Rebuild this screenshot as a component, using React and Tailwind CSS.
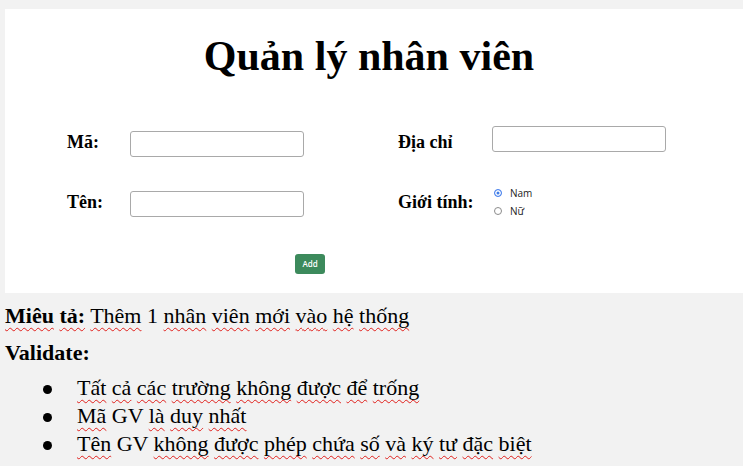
import React from "react";

const serif = "font-['Liberation_Serif','Times_New_Roman',serif]";
const sans = "font-['Open_Sans','Noto_Sans',sans-serif]";
const squiggle =
  "underline decoration-wavy decoration-[#e0201c] decoration-1 underline-offset-[4px] [text-decoration-skip-ink:none]";

// Word-style spell check marks: every word gets a red wave, except the ones in `plain`
const Checked = ({ text, plain = [] }) => {
  const words = text.split(" ");
  return (
    <>
      {words.map((w, i) => (
        <React.Fragment key={i}>
          <span className={plain.includes(w) ? "" : squiggle}>{w}</span>
          {i < words.length - 1 && " "}
        </React.Fragment>
      ))}
    </>
  );
};

const Field = ({ className = "" }) => (
  <input
    type="text"
    className={`w-[174px] h-[26px] border border-[#a9a9a9] rounded-[3px] bg-white outline-none px-1 ${className}`}
  />
);

const Radio = ({ label, checked }) => (
  <label className="flex items-center h-[18px]">
    <input
      type="radio"
      name="gender"
      defaultChecked={checked}
      className="appearance-none w-[8px] h-[8px] rounded-full border border-[#8c8c8c] bg-white checked:border-[#4f86ee] checked:bg-[#3f7de8] checked:shadow-[inset_0_0_0_1.5px_white]"
    />
    <span className={`${sans} ml-[8px] text-[10px] leading-[12px] text-[#222]`}>{label}</span>
  </label>
);

export default function App() {
  const rules = [
    "Tất cả các trường không được để trống",
    "Mã GV là duy nhất",
    "Tên GV không được phép chứa số và ký tư đặc biệt",
  ];

  return (
    <div className={`${serif} min-h-[466px] bg-[#f2f2f2] pt-[9px] pl-[5px] text-black`}>
      {/* form screenshot panel */}
      <div className="h-[284px] bg-white">
        <h1 className="pt-[26px] text-center text-[42px] leading-[42px] font-bold pr-[10px]">
          Quản lý nhân viên
        </h1>

        {/* row 1 */}
        <div className="flex mt-[49px] pl-[62px] h-[31px]">
          <div className="flex w-[331px] items-start">
            <span className="w-[63px] mt-[4px] text-[18px] leading-[24px] font-bold">Mã:</span>
            <Field className="mt-[5px]" />
          </div>
          <div className="flex items-start">
            <span className="w-[94px] mt-[4px] text-[18px] leading-[24px] font-bold">Địa chỉ</span>
            <Field />
          </div>
        </div>

        {/* row 2 */}
        <div className="flex mt-[29px] pl-[62px] h-[31px]">
          <div className="flex w-[331px] items-start">
            <span className="w-[63px] mt-[4px] text-[18px] leading-[24px] font-bold">Tên:</span>
            <Field className="mt-[5px]" />
          </div>
          <div className="flex items-start">
            <span className="w-[96px] mt-[4px] text-[18px] leading-[24px] font-bold">Giới tính:</span>
            <div className="flex flex-col -mt-[2px]">
              <Radio label="Nam" checked />
              <Radio label="Nữ" />
            </div>
          </div>
        </div>

        <button
          className={`${sans} block ml-[290px] mt-[37px] w-[30px] h-[20px] rounded-[3px] bg-[#3c8a5c] text-white text-[8px] font-semibold`}
        >
          Add
        </button>
      </div>

      {/* description */}
      <p className="mt-[8px] text-[22px] leading-[30px]">
        <span className="font-bold">
          <Checked text="Miêu tả:" />
        </span>{" "}
        <Checked text="Thêm 1 nhân viên mới vào hệ thống" plain={["1"]} />
      </p>
      <p className="mt-[7px] text-[22px] leading-[30px] font-bold">Validate:</p>
      <ul className="mt-[6px]">
        {rules.map((r) => (
          <li key={r} className="flex text-[22px] leading-[28px]">
            <span className="ml-[38px] mt-[11px] w-[9px] h-[9px] rounded-full bg-black shrink-0" />
            <span className="ml-[25px]">
              <Checked text={r} plain={["GV"]} />
            </span>
          </li>
        ))}
      </ul>
    </div>
  );
}
